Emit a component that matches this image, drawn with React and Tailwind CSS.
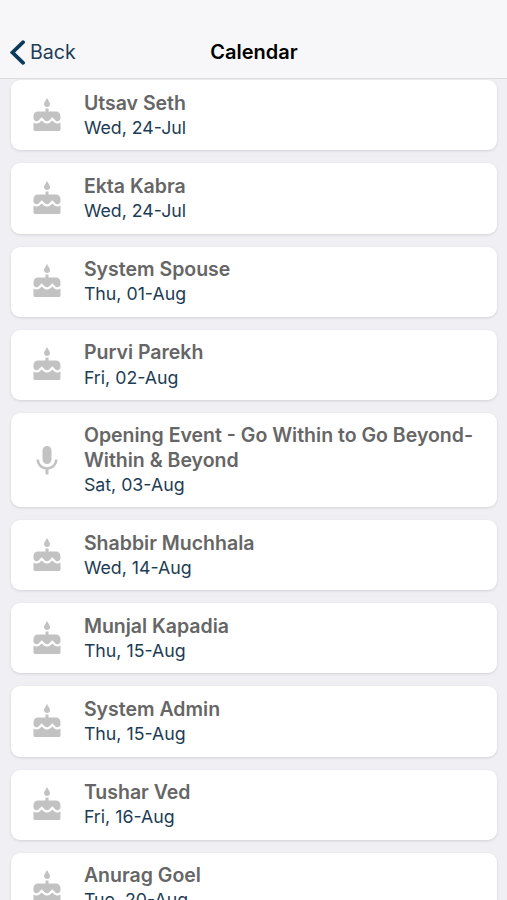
import { MdCake, MdMic } from 'react-icons/md'

const EVENTS = [
  { title: 'Utsav Seth', date: 'Wed, 24-Jul' },
  { title: 'Ekta Kabra', date: 'Wed, 24-Jul' },
  { title: 'System Spouse', date: 'Thu, 01-Aug' },
  { title: 'Purvi Parekh', date: 'Fri, 02-Aug' },
  { title: 'Opening Event - Go Within to Go Beyond-Within & Beyond', date: 'Sat, 03-Aug', type: 'talk' },
  { title: 'Shabbir Muchhala', date: 'Wed, 14-Aug' },
  { title: 'Munjal Kapadia', date: 'Thu, 15-Aug' },
  { title: 'System Admin', date: 'Thu, 15-Aug' },
  { title: 'Tushar Ved', date: 'Fri, 16-Aug' },
  { title: 'Anurag Goel', date: 'Tue, 20-Aug' },
]

function EventCard({ event }) {
  const Icon = event.type === 'talk' ? MdMic : MdCake
  return (
    <li className="flex shrink-0 items-center rounded-[9px] bg-white pt-[10.4px] pb-[10.2px] pl-[18.4px] pr-3 shadow-[0_1px_3px_rgba(0,0,0,0.12)]">
      <Icon className="mt-px size-9 shrink-0 text-[#c2c2c2]" />
      <div className="ml-[19px] min-w-0 flex-1">
        <h2 className="text-[19.5px] leading-[24.5px] font-semibold text-[#666666]">{event.title}</h2>
        <p className="text-[17.75px] leading-[25px] text-[#1d3d55]">{event.date}</p>
      </div>
    </li>
  )
}

export default function App() {
  return (
    <div className="flex h-[900px] w-[507px] flex-col overflow-hidden bg-[#efeff4] font-['Inter',sans-serif]">
      {/* Nav bar */}
      <header className="grid h-[79px] shrink-0 grid-cols-3 items-end border-b border-[#dcdcde] bg-[#f7f7f9] px-[10px] pb-[11px]">
        <button className="flex items-center gap-[5px] text-[19.6px] leading-[30px] text-[#1d3d55]">
          <svg className="h-[25px] w-[15px]" viewBox="0 0 15 25" fill="none" stroke="#0b3a5b" strokeWidth="3.7" strokeLinecap="round">
            <path d="M13.1 2.2 2.5 12.5l10.6 10.3" />
          </svg>
          Back
        </button>
        <h1 className="pl-px text-center text-[20px] leading-[30px] font-semibold text-black">Calendar</h1>
      </header>

      {/* Upcoming events */}
      <ul className="flex min-h-0 flex-1 flex-col gap-[13px] px-[10.5px] pt-[1.4px]">
        {EVENTS.map((event, i) => (
          <EventCard key={i} event={event} />
        ))}
      </ul>
    </div>
  )
}
